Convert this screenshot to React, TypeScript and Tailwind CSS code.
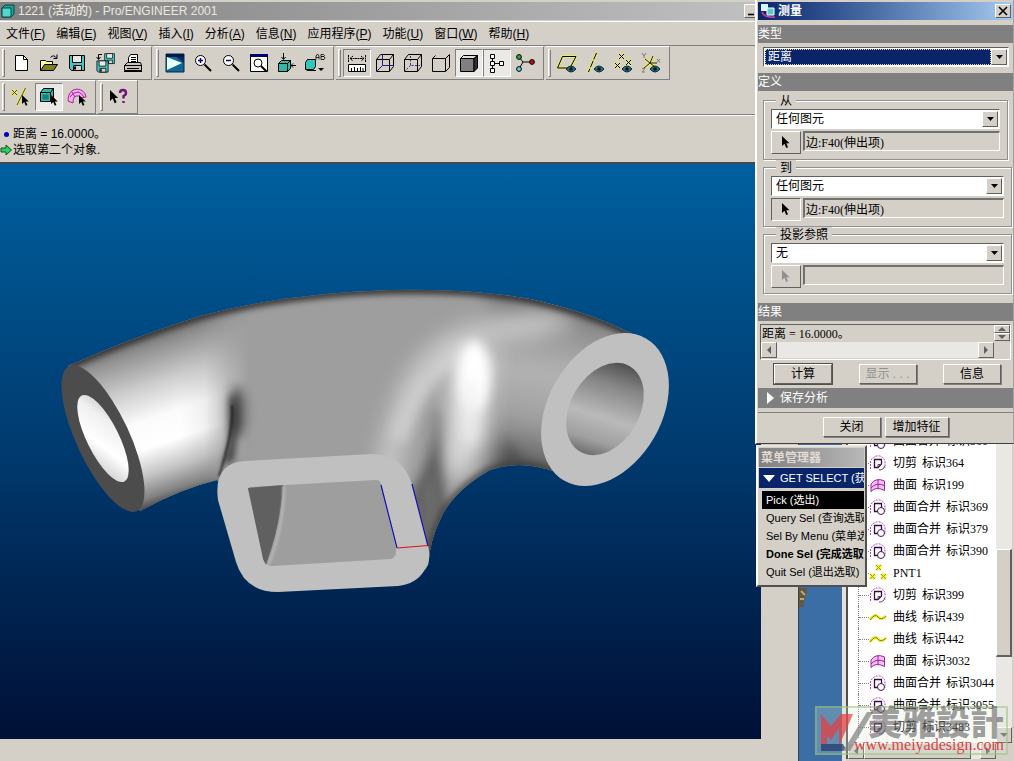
import React from "react";

const RAISED =
  "border border-t-white border-l-white border-r-[#606060] border-b-[#606060] bg-[#d4d0c8]";
const SUNKEN =
  "border border-t-[#606060] border-l-[#606060] border-r-white border-b-white";

/* ---------- toolbar glyphs ---------- */

function Glyph({ children }: { children: React.ReactNode }) {
  return (
    <svg
      viewBox="0 0 20 20"
      className="h-5 w-5 shrink-0"
      fill="none"
      stroke="#000"
      strokeWidth="1"
      aria-hidden="true"
    >
      {children}
    </svg>
  );
}

const ARROW = "M0 0V10L2.5 7.8L4.2 12L6 11.2L4.3 7.2H7.5Z";

function Eye({ x, y }: { x: number; y: number }) {
  return (
    <g>
      <path d={`M${x - 5} ${y}q5 -6 10 0q-5 6 -10 0z`} fill="#287078" stroke="#123" />
      <circle cx={x} cy={y} r="1.8" fill="#001820" stroke="none" />
    </g>
  );
}

function Cube({ inner }: { inner?: React.ReactNode }) {
  return (
    <Glyph>
      <path d="M1.500 6.500H14.500V18.500H1.500ZM1.500 6.500L5.500 1.500H18.500L14.500 6.500M18.500 1.500V13.500L14.500 18.500" />
      {inner}
    </Glyph>
  );
}

const Floppy = ({ t }: { t?: string }) => (
  <g transform={t}>
    <path d="M2.500 2.500H17.500V17.500H4.500L2.500 15.500Z" fill="#40c8c8" />
    <path d="M5.500 2.500H14.500V9.500H5.500Z" fill="#e8e8e0" />
    <path d="M6.500 12.500H14.500V17.500H6.500Z" fill="#d4d0c8" />
    <path d="M8 13.500V16.500" strokeWidth="2" />
  </g>
);

const icons: Record<string, React.ReactNode> = {
  new: (
    <Glyph>
      <path d="M4.500 2.500H12.500L16.500 6.500V17.500H4.500Z" fill="#fff" />
      <path d="M12.500 2.500V6.500H16.500" />
    </Glyph>
  ),
  open: (
    <Glyph>
      <path d="M1.500 17.500V7.500H6.500L7.500 8.500H13.500V11" fill="#ffff90" />
      <path d="M1.500 17.500L5.500 11.500H18.500L14.500 17.500Z" fill="#808020" />
      <path d="M11.500 4.500Q14.500 1 17.500 5M18 1.500V5.500H14.500" />
    </Glyph>
  ),
  save: (
    <Glyph>
      <Floppy />
    </Glyph>
  ),
  copy: (
    <Glyph>
      <Floppy t="translate(8 -1) scale(.66)" />
      <Floppy t="translate(0 6) scale(.75)" />
      <path d="M7 1.500H3.500V6M1.500 4L3.500 6.500L5.500 4" />
    </Glyph>
  ),
  print: (
    <Glyph>
      <path d="M5.500 10.500V4.500L7.500 1.500H14.500V10.500Z" fill="#fff" />
      <path d="M8 4.500H13M8 6.500H13M8 8.500H13" />
      <path d="M1.500 12.500L4.500 9.500H17.500L18.500 12.500V17.500H1.500Z" fill="#c8c4bc" />
      <path d="M1.500 12.500H18.500M4 15.500H16" />
      <path d="M1 18.500H19" />
    </Glyph>
  ),
  repaint: (
    <Glyph>
      <path d="M1 1H19V19H1Z" fill="#106890" stroke="#002858" />
      <path d="M1 2H9L19 10V1Z" fill="#082860" stroke="none" />
      <path d="M2 4L17 10L2 17Z" fill="#e8fff8" stroke="none" />
      <path d="M1 2.500H19" stroke="#001848" strokeWidth="3" />
    </Glyph>
  ),
  zoomIn: (
    <Glyph>
      <circle cx="7.500" cy="7.500" r="5" fill="#fff" />
      <path d="M7.500 5V10M5 7.500H10" stroke="#000090" strokeWidth="1.500" />
      <path d="M11.500 11.500L18 18" strokeWidth="2" />
    </Glyph>
  ),
  zoomOut: (
    <Glyph>
      <circle cx="7.500" cy="7.500" r="5" fill="#fff" />
      <path d="M5 7.500H10" stroke="#000090" strokeWidth="1.500" />
      <path d="M11.500 11.500L18 18" strokeWidth="2" />
    </Glyph>
  ),
  refit: (
    <Glyph>
      <path d="M1.500 2.500H18.500V18.500H1.500Z" fill="#fff" />
      <path d="M1 2.500H19" stroke="#000070" strokeWidth="3" />
      <circle cx="9" cy="10" r="4" />
      <path d="M12 13L17.500 18.500" strokeWidth="2" />
    </Glyph>
  ),
  orient: (
    <Glyph>
      <path d="M1.500 10.500L4.500 7.500H13.500V15.500L10.500 18.500H1.500Z" fill="#30b8a8" />
      <path d="M1.500 10.500H10.500V18.500M10.500 10.500L13.500 7.500M6.500 0V6M4.500 4L6.500 6.500L8.500 4M19 12.500H14M16 10.500L14 12.500L16 14.500" />
    </Glyph>
  ),
  views: (
    <svg viewBox="0 0 22 20" className="h-5 w-[22px] shrink-0" fill="none" stroke="#000" aria-hidden="true">
      <path d="M1.500 9.500L3.500 6.500H11.500V13.500L9.500 16.500H1.500Z" fill="#30c8b8" />
      <path d="M3 16.500V17.500H12" />
      <path d="M12 6.500V3L13.500 1L15 3V6.500M12 4.500H15M17 1.500H19.500L20.500 2.500L19.500 3.500H17ZM17 3.500H20L21 5L20 6.500H17Z" strokeWidth=".8" />
      <path d="M14 15H20L17 18Z" fill="#000" stroke="none" />
    </svg>
  ),
  dims: (
    <Glyph>
      <path d="M1.500 2V9M18.500 2V9M3 5.500H17M6 3L3 5.500L6 8M14 3L17 5.500L14 8" strokeDasharray="2 .5" />
      <path d="M1.500 11.500H18.500V18.500H1.500Z" fill="#fff" />
      <path d="M4.500 18V15M7.500 18V14M10.500 18V15M13.500 18V14M16 18V15" />
    </Glyph>
  ),
  wire: <Cube inner={<path d="M7.500 1.500V12.500H18.500M7.500 12.500L1.500 18.500" stroke="#202080" />} />,
  hidden: (
    <Cube inner={<path d="M7.500 3V12.500H17M7.500 12.500L2 18" stroke="#303080" strokeDasharray="2 1.500" />} />
  ),
  noHidden: (
    <Glyph>
      <path d="M1.500 5.500H14.500V18.500H1.500ZM1.500 5.500L4.500 2.500M14.500 5.500L18.500 1.500V14.500L14.500 18.500" />
    </Glyph>
  ),
  shade: (
    <Glyph>
      <path d="M1.500 5.500L4.500 2.500H18.500L15 5.500Z" fill="#e0e0e0" />
      <path d="M1.500 5.500H15V18.500H1.500Z" fill="#808080" />
      <path d="M15 5.500L18.500 2.500V15L15 18.500Z" fill="#303030" />
    </Glyph>
  ),
  tree: (
    <Glyph>
      <path d="M3.500 1.500H7.500V5.500H3.500ZM3.500 8.500H7.500V12.500H3.500ZM3.500 15.500H7.500V19.500H3.500ZM12.500 8.500H16.500V12.500H12.500Z" fill="#fff" />
      <path d="M7.500 10.500H12.500M5.500 5.500V8.500M5.500 12.500V15.500" />
    </Glyph>
  ),
  spin: (
    <Glyph>
      <path d="M4 4L8 9L4 16M8 9H17" />
      <circle cx="4" cy="4" r="2.400" fill="#20b040" />
      <circle cx="4" cy="16" r="2.400" fill="#60d0e8" />
      <circle cx="17" cy="9" r="2.400" fill="#c01020" />
    </Glyph>
  ),
  plane: (
    <Glyph>
      <path d="M5.500 3.500H19L13 15H.5Z" stroke="#e8e870" strokeWidth="3" />
      <path d="M5.500 3.500H19L13 15H.5Z" />
      <Eye x={14} y={16} />
    </Glyph>
  ),
  axis: (
    <Glyph>
      <path d="M11.500 0L3.500 19" stroke="#e8e870" strokeWidth="3" />
      <path d="M11.500 0L3.500 19" strokeDasharray="7 1.500" />
      <Eye x={14} y={16} />
    </Glyph>
  ),
  point: (
    <Glyph>
      <path d="M6 1L11 6M11 1L6 6M2 10L7 15M7 10L2 15M13 7L18 12M18 7L13 12" stroke="#e8e870" strokeWidth="3" />
      <path d="M6 1L11 6M11 1L6 6M2 10L7 15M7 10L2 15M13 7L18 12M18 7L13 12" />
      <Eye x={14} y={16} />
    </Glyph>
  ),
  csys: (
    <Glyph>
      <path d="M12 3L9 10H16M9 10L3 15M4 6L14 14" stroke="#e8e870" strokeWidth="3" />
      <path d="M12 3L9 10H16M9 10L3 15M4 6L14 14" stroke="#202010" />
      <path d="M1 0L3 3L5 0M3 3V5M16 6L19 9.500M19 6L16 9.500M1 15.500H4L1 19H4" stroke="#807c70" />
      <Eye x={14} y={16} />
    </Glyph>
  ),
  pickDatum: (
    <Glyph>
      <path d="M14.500 1L6 18M1 3L6 8M6 3L1 8" stroke="#e8e870" strokeWidth="3" />
      <path d="M14.500 1L6 18M1 3L6 8M6 3L1 8" stroke="#504810" />
      <path d={ARROW} transform="translate(11 8) scale(.9)" fill="#000" stroke="none" />
    </Glyph>
  ),
  pickGeom: (
    <Glyph>
      <path d="M1.500 5.500L4.500 1.500H14.500V10.500L11.500 14.500H1.500Z" fill="#30b8a8" />
      <path d="M1.500 5.500H11.500V14.500M11.500 5.500L14.500 1.500" />
      <path d="M3.500 7.500H9.500V12.500H3.500Z" fill="#108080" stroke="none" />
      <path d={ARROW} transform="translate(12 8) scale(.9)" fill="#000" stroke="none" />
    </Glyph>
  ),
  pickQuilt: (
    <Glyph>
      <path d="M1 14Q1 3 10 2Q18 3 19 10L14 11Q12 8 9 9Q6 10 6 16Z" fill="#f0b0e8" stroke="#b020a0" />
      <path d="M3 10Q6 5 11 5Q15 6 17 10M5 5L8 10" stroke="#b020a0" />
      <path d={ARROW} transform="translate(12 8) scale(.9)" fill="#000" stroke="none" />
    </Glyph>
  ),
  help: (
    <Glyph>
      <path d={ARROW} transform="translate(1 3) scale(1.100)" fill="#000" stroke="none" />
      <path d="M11 6Q11 3 14 3T17 6Q17 8 14.500 9V11.500M14.500 14V16" stroke="#701078" strokeWidth="2.400" />
    </Glyph>
  ),
};

type Tool = { icon: string; label: string; pressed?: boolean };

const row1: Tool[][] = [
  [
    { icon: "new", label: "新建" },
    { icon: "open", label: "打开" },
    { icon: "save", label: "保存" },
    { icon: "copy", label: "保存副本" },
    { icon: "print", label: "打印" },
  ],
  [
    { icon: "repaint", label: "重画" },
    { icon: "zoomIn", label: "放大" },
    { icon: "zoomOut", label: "缩小" },
    { icon: "refit", label: "重新调整" },
    { icon: "orient", label: "定向" },
    { icon: "views", label: "保存的视图" },
  ],
  [
    { icon: "dims", label: "尺寸", pressed: true },
    { icon: "wire", label: "线框" },
    { icon: "hidden", label: "隐藏线" },
    { icon: "noHidden", label: "无隐藏线" },
    { icon: "shade", label: "着色", pressed: true },
    { icon: "tree", label: "模型树", pressed: true },
    { icon: "spin", label: "旋转中心" },
  ],
  [
    { icon: "plane", label: "基准平面" },
    { icon: "axis", label: "基准轴" },
    { icon: "point", label: "基准点" },
    { icon: "csys", label: "坐标系" },
  ],
];

const row2: Tool[][] = [
  [
    { icon: "pickDatum", label: "选取基准" },
    { icon: "pickGeom", label: "选取几何", pressed: true },
    { icon: "pickQuilt", label: "选取面组" },
  ],
  [{ icon: "help", label: "上下文帮助" }],
];

function ToolRow({ groups }: { groups: Tool[][] }) {
  return (
    <div className="flex h-[34px] gap-0.5">
      {groups.map((g, i) => (
        <div
          key={i}
          className="flex items-center border-r border-b border-t border-t-white border-r-[#808080] border-b-[#808080] pr-1 pl-0.5"
        >
          <span className="mr-0.5 h-7 w-[3px] border border-t-white border-l-white border-r-[#808080] border-b-[#808080]" />
          {g.map((t) => (
            <button
              key={t.icon}
              aria-label={t.label}
              className={
                "flex h-7 w-7 items-center justify-center " +
                (t.pressed
                  ? "border border-t-[#808080] border-l-[#808080] border-r-white border-b-white " +
                    (t.icon === "dims" ? "bg-[#d4d0c8]" : "bg-[#ebe9e5]")
                  : "")
              }
            >
              {icons[t.icon]}
            </button>
          ))}
        </div>
      ))}
    </div>
  );
}

const menus: [string, string][] = [
  ["文件", "F"],
  ["编辑", "E"],
  ["视图", "V"],
  ["插入", "I"],
  ["分析", "A"],
  ["信息", "N"],
  ["应用程序", "P"],
  ["功能", "U"],
  ["窗口", "W"],
  ["帮助", "H"],
];

/* ---------- shaded model ---------- */

const BODY =
  "M68 366Q130 338 200 316Q285 293 390 290Q470 288 530 299Q590 312 632 334L600 409L556 472Q520 459 490 470Q452 492 440 520Q430 540 428 566L380 570L240 520L217 480Q180 489 140 511L103 438Z";

function Model() {
  return (
    <svg viewBox="0 164 761 575" className="h-full w-full" preserveAspectRatio="xMinYMin meet" role="img" aria-label="三通管模型">
      <defs>
        <clipPath id="body">
          <path d={BODY} />
        </clipPath>
        <clipPath id="hole">
          <ellipse cx="605" cy="409" rx="49.500" ry="34.500" transform="rotate(-60 605 409)" />
        </clipPath>
        <linearGradient id="pipe" gradientUnits="userSpaceOnUse" x1="125" y1="340" x2="178" y2="497">
          <stop offset="0" stopColor="#707070" />
          <stop offset=".12" stopColor="#989898" />
          <stop offset=".3" stopColor="#cccccc" />
          <stop offset=".5" stopColor="#fbfbfb" />
          <stop offset=".66" stopColor="#ffffff" />
          <stop offset=".82" stopColor="#c4c4c4" />
          <stop offset=".95" stopColor="#808080" />
          <stop offset="1" stopColor="#505050" />
        </linearGradient>
        <linearGradient id="fade" gradientUnits="userSpaceOnUse" x1="180" y1="0" x2="250" y2="0">
          <stop offset="0" stopColor="#fff" />
          <stop offset=".35" stopColor="#ddd" />
          <stop offset=".7" stopColor="#555" />
          <stop offset="1" stopColor="#000" />
        </linearGradient>
        <mask id="pipeMask" maskUnits="userSpaceOnUse" x="50" y="280" width="220" height="250">
          <rect x="50" y="280" width="220" height="250" fill="url(#fade)" />
        </mask>
        <linearGradient id="bore" gradientUnits="userSpaceOnUse" x1="82" y1="400" x2="124" y2="482">
          <stop offset="0" stopColor="#b0b0b0" />
          <stop offset=".3" stopColor="#f0f0f0" />
          <stop offset=".55" stopColor="#ffffff" />
          <stop offset="1" stopColor="#a8a8a8" />
        </linearGradient>
        <linearGradient id="boreR" gradientUnits="userSpaceOnUse" x1="626" y1="364" x2="597" y2="456">
          <stop offset="0" stopColor="#505050" />
          <stop offset=".25" stopColor="#868686" />
          <stop offset=".6" stopColor="#bababa" />
          <stop offset=".85" stopColor="#a0a0a0" />
          <stop offset="1" stopColor="#747474" />
        </linearGradient>
        <linearGradient id="right" gradientUnits="userSpaceOnUse" x1="555" y1="305" x2="525" y2="470">
          <stop offset="0" stopColor="#787878" />
          <stop offset=".15" stopColor="#949494" />
          <stop offset=".4" stopColor="#b4b4b4" />
          <stop offset=".7" stopColor="#a0a0a0" />
          <stop offset="1" stopColor="#585858" />
        </linearGradient>
        <g colorInterpolationFilters="sRGB">
          <filter id="b1" x="-50%" y="-50%" width="200%" height="200%" colorInterpolationFilters="sRGB"><feGaussianBlur stdDeviation="1" /></filter>
          <filter id="b3" x="-50%" y="-50%" width="200%" height="200%" colorInterpolationFilters="sRGB"><feGaussianBlur stdDeviation="3" /></filter>
          <filter id="b5" x="-100%" y="-50%" width="300%" height="200%" colorInterpolationFilters="sRGB"><feGaussianBlur stdDeviation="6" /></filter>
          <filter id="b9" x="-100%" y="-50%" width="300%" height="200%" colorInterpolationFilters="sRGB"><feGaussianBlur stdDeviation="10" /></filter>
        </g>
      </defs>
      <g clipPath="url(#body)">
        <rect x="50" y="280" width="620" height="320" fill="#9e9e9e" />
        <path d="M50 280H260V530H50Z" fill="url(#pipe)" mask="url(#pipeMask)" />
        <path d="M490 270H680V510H490Z" fill="url(#right)" filter="url(#b9)" />
        <path d="M386 490Q400 350 480 334T560 330" stroke="#c4c4c4" strokeWidth="26" fill="none" filter="url(#b9)" />
        <path d="M398 440Q420 365 470 350" stroke="#cccccc" strokeWidth="16" fill="none" filter="url(#b5)" />
        <path d="M448 352Q470 335 496 352L488 430Q480 458 458 480Q442 480 446 440Z" fill="#d8d8d8" filter="url(#b9)" />
        <ellipse cx="474" cy="376" rx="16" ry="36" fill="#ffffff" filter="url(#b5)" />
        <ellipse cx="470" cy="412" rx="11" ry="34" fill="#f0f0f0" opacity=".7" filter="url(#b5)" />
        <path d="M436 410Q434 460 410 495L430 570L450 515Q438 480 439 410Z" fill="#5c5c5c" filter="url(#b5)" />
        <path d="M420 490L428 570L444 520L434 470Z" fill="#6c6c6c" filter="url(#b5)" />
        <path d="M508 440Q518 462 552 478L500 480Z" fill="#505050" filter="url(#b5)" />
        <ellipse cx="237" cy="412" rx="7" ry="26" fill="#404040" filter="url(#b5)" />
        <path d="M230 396Q234 428 222 466L234 460Q240 425 234 398Z" fill="#202020" opacity=".7" filter="url(#b3)" />
        <path d="M232 405Q234 430 219 476" stroke="#101010" strokeWidth="1.500" fill="none" filter="url(#b1)" />
        <path d="M68 366Q130 338 200 316Q285 293 390 290Q470 288 530 299Q590 312 632 334" stroke="#303030" strokeWidth="8" fill="none" filter="url(#b3)" />
        <path d="M556 472Q520 459 490 470Q452 492 440 520Q430 540 428 566" stroke="#404040" strokeWidth="6" fill="none" filter="url(#b3)" />
      </g>
      <ellipse cx="103" cy="438.500" rx="80" ry="26.500" transform="rotate(65 103 438.500)" fill="#4c4c4c" />
      <ellipse cx="103" cy="438.500" rx="48" ry="16" transform="rotate(63.600 103 438.500)" fill="url(#bore)" />
      <ellipse cx="605" cy="409.500" rx="82" ry="56.600" transform="rotate(-60 605 409.500)" fill="#c0c0c0" />
      <rect x="550" y="350" width="110" height="120" fill="url(#boreR)" clipPath="url(#hole)" />
      <path
        fill="#c0c0c0"
        d="M245 461L372 454Q402 454 412 484L428 545Q432 562 424 571Q416 584 398 586L278 592Q245 592 236 562L218 500Q213 463 245 461Z"
      />
      <path d="M248 490Q248 487 251 487L376 480Q380 480 381 484L396 548Q397 557 391 559L272 566Q266 566 264 559Z" fill="#9e9e9e" />
      <path d="M248 488L283 485Q281 525 266 565L263 559Z" fill="#606060" />
      <path d="M284 486Q284 525 269 564" stroke="#b4b4b4" strokeWidth="3" fill="none" filter="url(#b1)" />
      <path d="M381 485L397 548M412 484L428 546" stroke="#1010b0" strokeWidth="1.200" />
      <path d="M397 548L428 545.500" stroke="#e01010" strokeWidth="1.200" />
    </svg>
  );
}

/* ---------- main window ---------- */

function CaptionButton({ label, children }: { label: string; children: React.ReactNode }) {
  return (
    <button aria-label={label} className={RAISED + " flex h-[14px] w-4 items-center justify-center"}>
      <svg viewBox="0 0 10 10" className="h-2.5 w-2.5" stroke="#000" fill="none" strokeWidth="1.600" aria-hidden="true">
        {children}
      </svg>
    </button>
  );
}

function MainWindow() {
  return (
    <main className="mr-[215px] flex h-full flex-col border-r border-[#404040] bg-[#d4d0c8]">
      <header className="mt-0.5 flex h-[18px] items-center bg-linear-to-r from-[#808080] to-[#c4c4c4] pr-1.5 text-white">
        <svg viewBox="0 0 14 14" className="mr-[3px] ml-px h-3.5 w-3.5" stroke="#064848" aria-hidden="true">
          <path d="M1 4L4 1H13V10L10 13H1Z" fill="#20a098" />
          <path d="M1 4H10V13H1Z" fill="#50d8d0" />
        </svg>
        <h1 className="flex-1 text-[12px] leading-4 font-medium whitespace-nowrap text-[#ece8e0]">
          1221 (活动的) - Pro/ENGINEER 2001
        </h1>
        <CaptionButton label="最小化">
          <path d="M1 8.500H7" />
        </CaptionButton>
        <CaptionButton label="最大化">
          <path d="M1 1.500H9V9H1Z" />
        </CaptionButton>
        <CaptionButton label="关闭窗口">
          <path d="M1 1L9 9M9 1L1 9" />
        </CaptionButton>
      </header>
      <nav className="mt-px flex h-6 items-center gap-[11px] border-t border-white pl-1.5">
        {menus.map(([name, key]) => (
          <button key={key} className="text-[12px] leading-4 whitespace-nowrap">
            {name}(<span className="underline">{key}</span>)
          </button>
        ))}
      </nav>
      <div className="border-t border-b border-t-[#808080] border-b-[#808080]">
        <ToolRow groups={row1} />
        <ToolRow groups={row2} />
      </div>
      <section className="flex h-[49px] flex-col justify-end border-t border-b-2 border-t-white border-b-[#404850] pb-1 text-[12px] leading-4">
        <p className="flex items-center gap-1 pl-1">
          <span className="h-[5px] w-[5px] rounded-full bg-[#0000c8]" />
          距离 = 16.0000。
        </p>
        <p className="flex items-center">
          <svg viewBox="0 0 12 12" className="mr-px h-3 w-3" aria-hidden="true">
            <path d="M1 4H6V1L11.500 6L6 11V8H1Z" fill="#30d060" stroke="#085020" />
          </svg>
          选取第二个对象.
        </p>
      </section>
      <div className="mr-[37px] mb-[22px] min-h-0 flex-1 bg-linear-to-b from-[#00609f] via-[#003a6e] to-[#001036]">
        <Model />
      </div>
    </main>
  );
}

/* ---------- measure dialog ---------- */

function SectionTitle({ children }: { children: React.ReactNode }) {
  return <h3 className="h-[18px] bg-[#808080] text-[12px] leading-[18px] text-white">{children}</h3>;
}

function Combo({ label, value, active }: { label: string; value: string; active?: boolean }) {
  return (
    <div className={SUNKEN + " flex h-5 bg-white p-px"}>
      <select
        aria-label={label}
        className={
          "min-w-0 flex-1 appearance-none px-[3px] text-[12px] leading-4 " +
          (active ? "bg-[#0a246a] text-white outline-1 -outline-offset-1 outline-dotted outline-[#e0d8a0]" : "bg-white text-black")
        }
      >
        <option>{value}</option>
      </select>
      <span className={RAISED + " flex w-4 items-center justify-center"}>
        <svg viewBox="0 0 7 4" className="h-1 w-[7px]" aria-hidden="true">
          <path d="M0 0H7L3.500 4Z" />
        </svg>
      </span>
    </div>
  );
}

function PickGroup({
  title,
  value,
  picked,
  pressed,
  disabled,
  narrow,
}: {
  title: string;
  value: string;
  picked: string;
  pressed?: boolean;
  disabled?: boolean;
  narrow?: boolean;
}) {
  return (
    <fieldset className={"ml-[5px] h-[67px] " + (narrow ? "mr-[5px]" : "mr-px")}>
      <div className="relative mt-[7px] h-[60px] border border-[#909090] px-[7px] pt-2 shadow-[1px_1px_0_#fff,inset_1px_1px_0_#fff]">
        <legend className="absolute -top-2 left-3 bg-[#d4d0c8] px-1 text-[12px] leading-4">{title}</legend>
        <Combo label={title} value={value} />
        <div className="mt-0.5 flex gap-0.5">
          <button
            aria-label={title + " 选取"}
            disabled={disabled}
            className={(pressed ? SUNKEN : RAISED) + " flex h-[23px] w-[30px] items-center justify-center"}
          >
            <svg viewBox="0 0 8 13" className="h-[13px] w-2" fill={disabled ? "#909090" : "#000"} aria-hidden="true">
              <path d={ARROW} />
            </svg>
          </button>
          <input
            readOnly
            aria-label={title + " 参照"}
            defaultValue={picked}
            className="h-5 min-w-0 flex-1 border border-t-2 border-l-2 border-t-[#707070] border-l-[#707070] border-r-white border-b-white bg-[#d4d0c8] px-px font-serif text-[12px] leading-4"
          />
        </div>
      </div>
    </fieldset>
  );
}

function PushButton({ children, wide, disabled, primary }: { children: React.ReactNode; wide?: boolean; disabled?: boolean; primary?: boolean }) {
  return (
    <button
      disabled={disabled}
      className={
        RAISED +
        " h-5 text-[12px] leading-4 shadow-[1px_1px_0_#808080] " +
        (wide ? "w-16 " : "w-[58px] ") +
        (primary ? "outline-1 outline-[#505050] " : "") +
        (disabled ? "text-[#909090]" : "text-black")
      }
    >
      {children}
    </button>
  );
}

function ArrowBox({ d, className }: { d: string; className: string }) {
  return (
    <span className={RAISED + " flex shrink-0 items-center justify-center " + className}>
      <svg viewBox="0 0 8 8" className="h-2 w-2" fill="#606060" aria-hidden="true">
        <path d={d} />
      </svg>
    </span>
  );
}

const LEFT = "M6 0V8L2 4Z";
const RIGHT = "M2 0V8L6 4Z";
const UP = "M0 6H8L4 2Z";
const DOWN = "M0 2H8L4 6Z";
const TRACK = "bg-[#eae8e4]";

function MeasureDialog() {
  return (
    <section
      aria-label="测量"
      className="absolute top-0 right-0 w-[259px] border-r border-b border-l-2 border-l-white border-r-[#a0a0a0] border-b-[#404040] bg-[#d4d0c8] pt-0.5 pb-1.5 pl-px"
    >
      <header className="flex h-[18px] items-center bg-linear-to-r from-[#0a246a] to-[#a6caf0] pr-0.5 text-white">
        <svg viewBox="0 0 16 16" className="mx-0.5 h-4 w-4" aria-hidden="true">
          <path d="M1 1H8V8H1Z" fill="#d8f8ff" />
          <path d="M7 5H14V12H7Z" fill="#60c8c8" stroke="#fff" />
          <path d="M2 9Q4 15 15 14" stroke="#e040a0" fill="none" strokeWidth="1.500" />
        </svg>
        <h2 className="flex-1 text-[12px] leading-4 font-bold">测量</h2>
        <CaptionButton label="关闭">
          <path d="M1 1L9 9M9 1L1 9" />
        </CaptionButton>
      </header>
      <div className="mt-[5px]">
        <SectionTitle>类型</SectionTitle>
      </div>
      <div className="mt-1 mr-1 mb-1.5 ml-[5px]">
        <Combo label="类型" value="距离" active />
      </div>
      <SectionTitle>定义</SectionTitle>
      <div className="pt-0.5">
        <PickGroup title="从" value="任何图元" picked="边:F40(伸出项)" narrow />
        <PickGroup title="到" value="任何图元" picked="边:F40(伸出项)" pressed />
        <PickGroup title="投影参照" value="无" picked="" disabled />
      </div>
      <div className="mt-[9px]">
        <SectionTitle>结果</SectionTitle>
      </div>
      <div className={SUNKEN + " mt-[3px] mr-0.5 ml-0.5 flex h-9"}>
        <div className="min-w-0 flex-1">
          <output className="block h-[17px] pl-px font-serif text-[12px] leading-[18px]">距离 = 16.0000。</output>
          <div className={TRACK + " flex h-4 justify-between"}>
            <ArrowBox d={LEFT} className="w-4" />
            <ArrowBox d={RIGHT} className="w-4" />
          </div>
        </div>
        <div className="flex w-4 flex-col">
          <ArrowBox d={UP} className="h-2" />
          <ArrowBox d={DOWN} className="h-2" />
        </div>
      </div>
      <div className="mt-1 flex justify-between pr-3 pl-4">
        <PushButton primary>计算</PushButton>
        <PushButton disabled>显示 . . .</PushButton>
        <PushButton>信息</PushButton>
      </div>
      <button className="mt-1 flex h-5 w-full items-center gap-1.5 bg-[#808080] pl-[9px] text-[12px] leading-4 text-white">
        <svg viewBox="0 0 7 12" className="h-3 w-[7px]" fill="#fff" aria-hidden="true">
          <path d="M0 0L7 6L0 12Z" />
        </svg>
        保存分析
      </button>
      <div className="mt-1 flex justify-center gap-1 border-t border-[#808080] pt-1">
        <PushButton>关闭</PushButton>
        <PushButton wide>增加特征</PushButton>
      </div>
    </section>
  );
}

/* ---------- menu manager ---------- */

function MenuManager() {
  return (
    <section
      aria-label="菜单管理器"
      className="absolute top-[445px] right-[147px] w-[111px] overflow-hidden border-2 border-t-[#e8e4dc] border-l-white border-r-[#505050] border-b-[#505050] bg-[#d4d0c8] p-px pb-1 text-[12px] whitespace-nowrap"
    >
      <h2 className="h-[19px] bg-linear-to-r from-[#808080] to-[#b8b8b8] pl-0.5 leading-5 font-bold text-[#e0dcd4]">菜单管理器</h2>
      <h3 className="mt-px flex h-5 items-center gap-[5px] overflow-hidden bg-[#0a246a] pl-1 text-[11px] text-white">
        <svg viewBox="0 0 12 7" className="h-[7px] w-3 shrink-0" fill="#fff" aria-hidden="true">
          <path d="M0 0H12L6 7Z" />
        </svg>
        GET SELECT (获得
      </h3>
      <div className="mt-[3px] ml-[3px] flex flex-col items-stretch text-[11px] leading-[18px]">
        <button className="overflow-hidden bg-black pl-1 text-left text-white">Pick (选出)</button>
        <button className="overflow-hidden pl-1 text-left">Query Sel (查询选取</button>
        <button className="overflow-hidden pl-1 text-left">Sel By Menu (菜单选</button>
        <button className="overflow-hidden pl-1 text-left font-bold">Done Sel (完成选取)</button>
        <button className="overflow-hidden pl-1 text-left">Quit Sel (退出选取)</button>
      </div>
    </section>
  );
}

/* ---------- model tree ---------- */

type Node = { kind: "cut" | "surf" | "merge" | "curve" | "pnt"; name: string; id?: string };

const nodes: Node[] = [
  { kind: "merge", name: "曲面合并", id: "标识360" },
  { kind: "cut", name: "切剪", id: "标识364" },
  { kind: "surf", name: "曲面", id: "标识199" },
  { kind: "merge", name: "曲面合并", id: "标识369" },
  { kind: "merge", name: "曲面合并", id: "标识379" },
  { kind: "merge", name: "曲面合并", id: "标识390" },
  { kind: "pnt", name: "PNT1" },
  { kind: "cut", name: "切剪", id: "标识399" },
  { kind: "curve", name: "曲线", id: "标识439" },
  { kind: "curve", name: "曲线", id: "标识442" },
  { kind: "surf", name: "曲面", id: "标识3032" },
  { kind: "merge", name: "曲面合并", id: "标识3044" },
  { kind: "merge", name: "曲面合并", id: "标识3055" },
  { kind: "cut", name: "切剪", id: "标识3483" },
];

function NodeIcon({ kind }: { kind: Node["kind"] }) {
  return (
    <svg viewBox="0 0 18 18" className="h-[18px] w-[18px] shrink-0" fill="none" aria-hidden="true">
      {kind === "surf" && (
        <g stroke="#a020a0">
          <path d="M2 15.500V8Q7 1 15.500 5V14.500Q7 10 2 15.500Z" fill="#f4c0f0" />
          <path d="M9 4V12.500M2 12Q7 6 15.500 9.500" />
        </g>
      )}
      {(kind === "cut" || kind === "merge") && (
        <g>
          <path d="M1.500 15V7Q5 1 11 2Q16 4 16 8V14" stroke="#c040c0" strokeDasharray="2 1" />
          <path d="M5.500 5.500H12.500V10L9 13.500H5.500Z" stroke="#301040" fill="#fff" strokeWidth="1.300" />
          {kind === "cut" ? (
            <path d="M9 13.500V10.500H12.500M10 16Q15 16 15.500 12" stroke="#604060" />
          ) : (
            <circle cx="12" cy="13" r="3.500" stroke="#402050" fill="#fff8ff" />
          )}
        </g>
      )}
      {kind === "curve" && (
        <g>
          <path d="M1 12Q6 5 9 9T17 8" stroke="#f0f040" strokeWidth="3" />
          <path d="M1 12Q6 5 9 9T17 8" stroke="#808000" />
        </g>
      )}
      {kind === "pnt" && (
        <g>
          <path d="M7 1L12 6M12 1L7 6M1 10L6 15M6 10L1 15M12 10L17 15M17 10L12 15" stroke="#f0f040" strokeWidth="3" />
          <path d="M7 1L12 6M12 1L7 6M1 10L6 15M6 10L1 15M12 10L17 15M17 10L12 15" stroke="#a0a000" />
        </g>
      )}
    </svg>
  );
}

function ModelTree() {
  return (
    <aside
      aria-label="模型树"
      className="absolute top-[430px] right-0 bottom-0 flex w-[172px] flex-col border-r-2 border-l-4 border-r-[#d4d0c8] border-l-[#e4e0d8] bg-[#d4d0c8] pb-0.5"
    >
      <div className="flex min-h-0 flex-1 border-l-2 border-[#505050]">
        <ul className="min-w-0 flex-1 overflow-hidden bg-white pl-2.5">
          {nodes.map((n, i) => (
            <li key={i} className="flex h-[22px] items-center border-l border-dotted border-[#808080] text-[12px] leading-4 whitespace-nowrap">
              <span className="w-2.5 shrink-0 border-t border-dotted border-[#808080]" />
              <NodeIcon kind={n.kind} />
              <span className="ml-1.5 flex gap-[5px] font-serif">
                <span>{n.name}</span>
                {n.id && <span>{n.id}</span>}
              </span>
            </li>
          ))}
        </ul>
        <div className={TRACK + " flex w-4 shrink-0 flex-col"}>
          <span className="h-[119px]" />
          <span className={RAISED + " h-[108px] border-r-2 border-b-2"} />
          <span className="flex-1" />
          <ArrowBox d={DOWN} className="h-4" />
        </div>
      </div>
      <div className={TRACK + " mr-4 flex h-4 border-l-2 border-[#505050]"}>
        <ArrowBox d={LEFT} className="w-4" />
        <span className={RAISED + " w-[107px]"} />
        <span className="flex-1" />
        <ArrowBox d={RIGHT} className="w-4" />
      </div>
    </aside>
  );
}

function Watermark() {
  return (
    <div className="pointer-events-none absolute right-1.5 bottom-1.5 h-[49px] w-[193px] border-2 border-[#90c070]/50 bg-[#e0e8d8]/25">
      <svg viewBox="0 0 56 44" className="h-11 w-14 opacity-70" aria-hidden="true">
        <path d="M4 42V6L14 18L24 6H36L30 20L22 38V20L14 32L10 28V38Z" fill="#e83c3c" />
        <path d="M4 36H26L30 43H4Z" fill="#203868" />
        <path d="M26 43L50 4H56L33 43Z" fill="#808080" />
      </svg>
      <div className="absolute top-0 right-0.5 flex flex-col items-end whitespace-nowrap">
        <span className="text-[34px] leading-[30px] font-black text-[#505050]/55">美雅設計</span>
        <span className="font-serif text-[16px] leading-[14px] text-[#d83030]/90">www.meiyadesign.com</span>
      </div>
    </div>
  );
}

export default function App() {
  return (
    <div className="relative h-screen min-h-[640px] overflow-hidden bg-[#3a6ea5] font-['Liberation_Sans','Noto_Sans_CJK_SC',sans-serif] text-black [&_.font-serif]:font-['Liberation_Serif','Noto_Sans_CJK_SC',serif]">
      <MainWindow />
      <svg viewBox="0 0 8 20" className="absolute top-[588px] right-[207px] h-5 w-2" aria-hidden="true">
        <path d="M0 0H8V5L5 12V19H0Z" fill="#605848" />
        <path d="M2 3L6 7M1 11H5" stroke="#c0a860" strokeWidth="2" />
      </svg>
      <ModelTree />
      <MenuManager />
      <MeasureDialog />
      <Watermark />
    </div>
  );
}
